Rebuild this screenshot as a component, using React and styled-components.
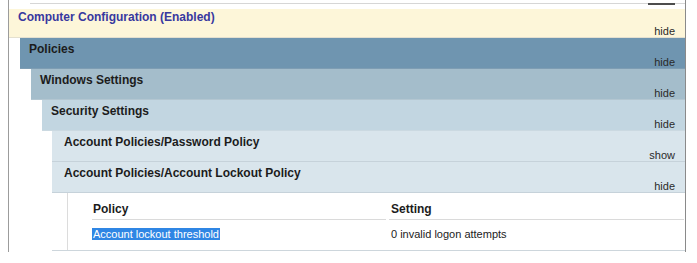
import React from "react";
import styled, { createGlobalStyle } from "styled-components";

const Global = createGlobalStyle`
  html, body { margin: 0; padding: 0; background: #ffffff; }
  body { font-family: "Liberation Sans", Arial, sans-serif; }
`;

const Frame = styled.div`
  margin-left: 8px;
  width: 676px;
  height: 252px;
  border-left: 1px solid #9c9c9c;
  border-right: 1px solid #8a8a8a;
  display: flex;
  flex-direction: column;
`;

const TopRule = styled.div`
  display: flex;
  margin: 3px 0 5px 21px;
  height: 1px;
  background: #d6d6d6;
`;

const Tick = styled.div`
  width: 27px;
  height: 2px;
  margin-left: auto;
  margin-right: 10px;
  background: #4d4d4d;
`;

const Header = styled.div`
  display: flex;
  flex-direction: column;
  padding: ${(p) => (p.$root ? "1px" : "4px")} 10px 0 ${(p) => p.$padLeft}px;
  background: ${(p) => p.$bg};
  border-bottom: 1px solid ${(p) => p.$line};
`;

const Title = styled.div`
  font-size: 12px;
  font-weight: bold;
  line-height: 14px;
  color: ${(p) => (p.$root ? "#38389f" : "#1c1c1c")};
  white-space: nowrap;
`;

const Toggle = styled.div`
  align-self: flex-end;
  font-size: 11px;
  line-height: 12px;
  padding-top: ${(p) => (p.$root ? "1px" : "0")};
  color: #2a2a2a;
`;

const Body = styled.div`
  display: flex;
  flex-direction: column;
  padding-left: ${(p) => p.$indent}px;
`;

const Details = styled.div`
  display: flex;
  border-bottom: 1px solid #cdd6dc;
`;

const DetailsInner = styled.div`
  flex: 1;
  margin-left: 15px;
  border-left: 1px solid #dcdcdc;
  padding: 7px 1px 0 24px;
  display: flex;
  flex-direction: column;
`;

const Row = styled.div`
  display: grid;
  grid-template-columns: 294px 1fr;
  column-gap: 3px;
`;

const HeadCell = styled.div`
  font-size: 12px;
  font-weight: bold;
  line-height: 19px;
  color: #1c1c1c;
  border-bottom: 1px solid #dadada;
  padding-left: ${(p) => p.$pad}px;
`;

const Cell = styled.div`
  font-size: 11px;
  line-height: 14px;
  color: #222;
  padding: 7px 0 9px ${(p) => p.$pad}px;
`;

const Selected = styled.span`
  background: #2f86e4;
  color: #ffffff;
  padding: 0 1px;
`;

const levels = [
  { bg: "#fdf6d9", line: "#e4e0cf", pad: 9 },
  { bg: "#6f95b0", line: "#7e9db3", pad: 9 },
  { bg: "#a4bdcb", line: "#b3c6d1", pad: 9 },
  { bg: "#c2d6e1", line: "#cbd9e1", pad: 9 },
  { bg: "#d9e5ec", line: "#c6d2da", pad: 12 },
];

function Section({ title, level, open = true, indent = 11, children }) {
  const c = levels[level];
  const root = level === 0;
  return (
    <>
      <Header $bg={c.bg} $line={c.line} $padLeft={c.pad} $root={root}>
        <Title $root={root}>{title}</Title>
        <Toggle $root={root}>{open ? "hide" : "show"}</Toggle>
      </Header>
      {children && <Body $indent={indent}>{children}</Body>}
    </>
  );
}

export default function App() {
  return (
    <>
      <Global />
      <Frame>
        <TopRule>
          <Tick />
        </TopRule>
        <Section title="Computer Configuration (Enabled)" level={0}>
          <Section title="Policies" level={1}>
            <Section title="Windows Settings" level={2}>
              <Section title="Security Settings" level={3} indent={10}>
                <Section title="Account Policies/Password Policy" level={4} open={false} />
                <Section title="Account Policies/Account Lockout Policy" level={4} indent={0}>
                  <Details>
                    <DetailsInner>
                      <Row>
                        <HeadCell $pad={1}>Policy</HeadCell>
                        <HeadCell $pad={2}>Setting</HeadCell>
                      </Row>
                      <Row>
                        <Cell $pad={0}>
                          <Selected>Account lockout threshold</Selected>
                        </Cell>
                        <Cell $pad={2}>0 invalid logon attempts</Cell>
                      </Row>
                    </DetailsInner>
                  </Details>
                </Section>
              </Section>
            </Section>
          </Section>
        </Section>
      </Frame>
    </>
  );
}
